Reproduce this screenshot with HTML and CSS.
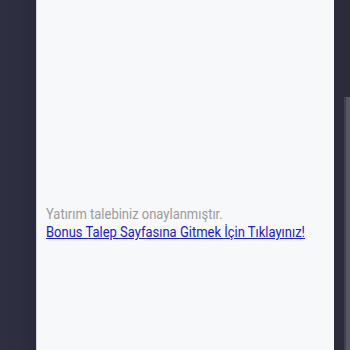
FILE: index.html
```html
<!DOCTYPE html>
<html>
<head>
<meta charset="utf-8">
<link rel="stylesheet" href="styles.css">
</head>
<body>
<div class="page">
  <div class="side-left"></div>
  <div class="panel">
    <div class="text">
      <p class="msg">Yatırım talebiniz onaylanmıştır.</p>
      <a class="link" href="#">Bonus Talep Sayfasına Gitmek İçin Tıklayınız!</a>
    </div>
  </div>
  <div class="side-right">
    <div class="scroll-space"></div>
    <div class="scroll-track"><div class="scroll-thumb"></div></div>
  </div>
</div>
</body>
</html>
```
FILE: styles.css
```css
html, body {
  margin: 0;
  padding: 0;
  width: 350px;
  height: 350px;
  overflow: hidden;
  background: #2a2c3c;
}
.page {
  display: flex;
  height: 350px;
}
.side-left {
  width: 36px;
  background: linear-gradient(to right, #2f3143 0%, #2d2f40 50%, #292b3b 100%);
}
.panel {
  width: 288px;
  border-left: 1px solid #d4d6dc;
  background: #f7f8fa;
  padding: 205px 0 0 9px;
  font-family: Roboto, "Noto Sans", sans-serif;
  font-size: 15px;
  line-height: 18px;
}
.text {
  width: 340px;
  transform: scaleX(0.865);
  transform-origin: left top;
}
.msg {
  margin: 0;
  color: #9b9b9b;
}
.link {
  color: #2020c8;
  text-decoration: underline;
}
.side-right {
  width: 16px;
  display: flex;
  flex-direction: column;
  background: #2a2c3b;
}
.scroll-space {
  height: 97px;
}
.scroll-track {
  flex: 1;
  display: flex;
  justify-content: flex-end;
}
.scroll-thumb {
  width: 6px;
  background: linear-gradient(to right, #3f4150 0%, #3f4150 33%, #555764 34%, #555764 100%);
}
```
